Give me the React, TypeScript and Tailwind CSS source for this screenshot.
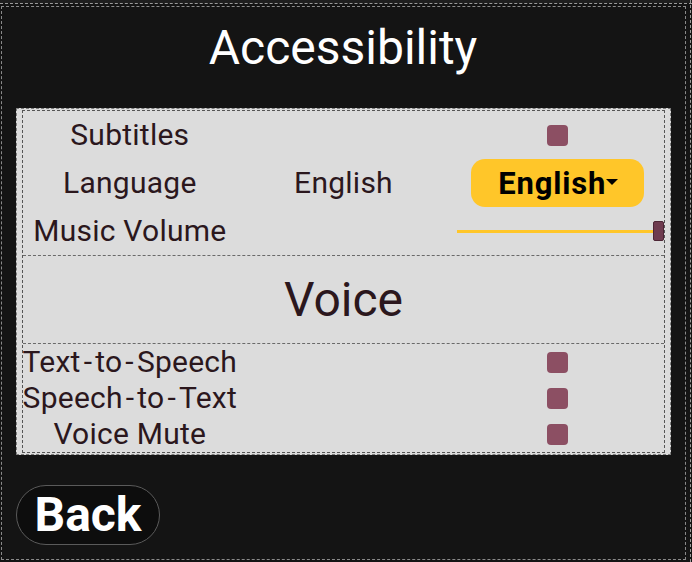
import React from "react";

const textDark = "text-[#2b171d]";
const labelCls = `flex justify-center whitespace-nowrap text-[30px] leading-none tracking-[0.25px] ${textDark}`;

function Check() {
  return <div className="w-[21px] h-[21px] rounded-[4px] bg-[#8c4f63]" />;
}

function Hy() {
  return <span className="mx-[3px]">-</span>;
}

function Row({ label, right }: { label: React.ReactNode; right?: React.ReactNode }) {
  return (
    <div className="flex h-[36px] items-center">
      <div className={`w-1/3 ${labelCls}`}>{label}</div>
      <div className="w-1/3" />
      <div className="flex w-1/3 justify-center">{right}</div>
    </div>
  );
}

export default function App() {
  return (
    <div
      className="relative w-[692px] h-[562px] overflow-hidden bg-[#141414]"
      style={{ fontFamily: "Roboto, 'Liberation Sans', sans-serif" }}
    >
      <div className="absolute left-0 right-0 top-0 h-[3px] bg-[#1e1e1e]" />
      <div className="flex h-[108px] items-center justify-center pb-[12px] pr-[6px] text-[48px] leading-none text-white">
        Accessibility
      </div>

      <div className="ml-[16px] h-[347px] w-[655px] border border-dashed border-[#7d7d7d] bg-[#dcdcdc] px-[5px] pt-px pb-px">
        <div className="h-[343px] w-[643px] border border-dashed border-[#555]">
          <div className="flex h-[48px] items-center">
            <div className={`w-1/3 ${labelCls}`}>Subtitles</div>
            <div className="w-1/3" />
            <div className="flex w-1/3 justify-center">
              <Check />
            </div>
          </div>
          <div className="flex h-[48px] items-center">
            <div className={`w-1/3 ${labelCls}`}>Language</div>
            <div className={`w-1/3 ${labelCls}`}>English</div>
            <div className="flex w-1/3 justify-center">
              <div className="flex h-[48px] w-[173px] items-center justify-center rounded-[14px] bg-[#ffc629] pl-[2px] text-[31px] font-bold leading-none tracking-[0.8px] text-black">
                English
                <svg width="12" height="6" viewBox="0 0 12 6" className="ml-0 mt-[-3px]">
                  <path d="M0 0 H12 L6 6 Z" fill="#000" />
                </svg>
              </div>
            </div>
          </div>
          <div className="flex h-[48px] items-center">
            <div className={`w-1/3 ${labelCls}`}>Music Volume</div>
            <div className="w-1/3" />
            <div className="relative flex h-[20px] w-1/3 items-center pl-[7px]">
              <div className="h-[3px] w-full bg-[#ffc629]" />
              <div className="absolute right-0 top-0 h-[20px] w-[11px] rounded-[2px] border border-[#4d2636] bg-[#6e3b4f]" />
            </div>
          </div>

          <div className={`flex h-[88px] items-center justify-center border-t border-dashed border-[#6a6a6a] text-[48px] leading-none ${textDark}`}>
            Voice
          </div>

          <div className="border-t border-dashed border-[#6a6a6a]">
            <Row label={<>Text<Hy />to<Hy />Speech</>} right={<Check />} />
            <Row label={<>Speech<Hy />to<Hy />Text</>} right={<Check />} />
            <Row label="Voice Mute" right={<Check />} />
          </div>
        </div>
      </div>

      <div className="ml-[16px] mt-[30px] flex h-[60px] w-[144px] items-center justify-center rounded-full border border-[#5a5a5a] bg-[#0d0d0d] text-[48px] font-bold leading-none text-white">
        Back
      </div>

      <div className="pointer-events-none absolute left-0 right-0 top-[3px] border-t border-dashed border-[#9a9a9a]" />
      <div className="pointer-events-none absolute bottom-0 right-[1px] top-0 border-l border-dashed border-[#9a9a9a]" />
      <div className="pointer-events-none absolute left-[1px] top-[6px] h-[554px] w-[685px] border border-dashed border-[#8a8a8a]" />
    </div>
  );
}
